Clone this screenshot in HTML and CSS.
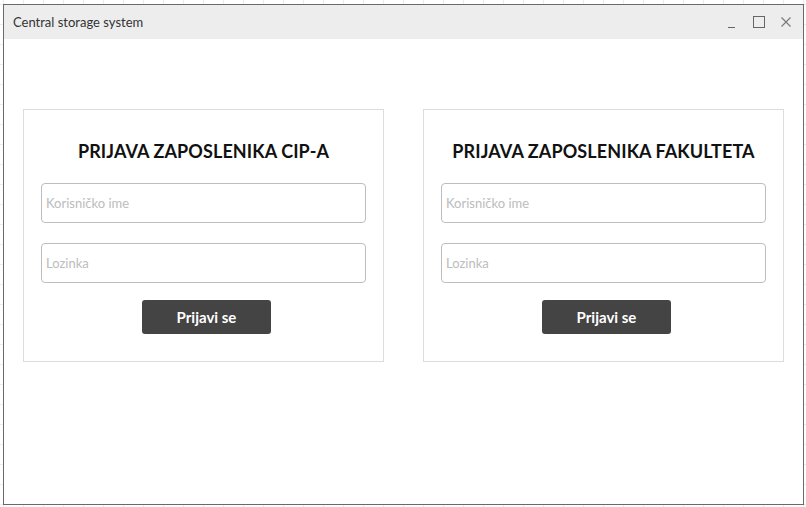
FILE: index.html
```html
<!DOCTYPE html>
<html>
<head>
<meta charset="utf-8">
<link rel="stylesheet" href="styles.css">
</head>
<body>
<div class="window">
  <div class="titlebar">
    <span class="title">Central storage system</span>
    <div class="controls">
      <svg class="ctl" width="14" height="14" viewBox="0 0 14 14"><line x1="3" y1="12.5" x2="10" y2="12.5" stroke="#666" stroke-width="1"/></svg>
      <svg class="ctl" width="14" height="14" viewBox="0 0 14 14"><rect x="1.5" y="1.5" width="11" height="11" fill="none" stroke="#666" stroke-width="1"/></svg>
      <svg class="ctl" width="14" height="14" viewBox="0 0 14 14"><path d="M2.5 2.5 L11.5 11.5 M11.5 2.5 L2.5 11.5" stroke="#777" stroke-width="1.1"/></svg>
    </div>
  </div>
  <div class="content">
    <div class="card">
      <h2 class="card-title">PRIJAVA ZAPOSLENIKA CIP-A</h2>
      <input class="field" type="text" placeholder="Korisničko ime">
      <input class="field" type="password" placeholder="Lozinka">
      <button class="btn">Prijavi se</button>
    </div>
    <div class="card">
      <h2 class="card-title">PRIJAVA ZAPOSLENIKA FAKULTETA</h2>
      <input class="field" type="text" placeholder="Korisničko ime">
      <input class="field" type="password" placeholder="Lozinka">
      <button class="btn">Prijavi se</button>
    </div>
  </div>
</div>
</body>
</html>
```
FILE: styles.css
```css
html, body {
  margin: 0;
  padding: 0;
}
body {
  width: 806px;
  height: 507px;
  overflow: hidden;
  background-color: #fff;
  background-image:
    linear-gradient(to right, #ececec 1px, transparent 1px),
    linear-gradient(to bottom, #ececec 1px, transparent 1px);
  background-size: 20px 20px;
  background-position: 3px 4px;
  font-family: Lato, "Open Sans", sans-serif;
  padding-top: 4px;
  padding-left: 3px;
  box-sizing: border-box;
}
.window {
  width: 801px;
  height: 501px;
  box-sizing: border-box;
  border: 1px solid #6a6a6a;
  background: #fff;
  display: flex;
  flex-direction: column;
}
.titlebar {
  height: 34px;
  background: #ededed;
  display: flex;
  align-items: center;
  justify-content: space-between;
  padding: 0 10px 0 9px;
  flex: none;
}
.title {
  font-size: 13px;
  color: #333;
}
.controls {
  display: flex;
  gap: 13px;
  align-items: center;
}
.ctl {
  display: block;
}
.content {
  display: flex;
  gap: 39px;
  padding: 70px 19px 0 19px;
}
.card {
  width: 361px;
  height: 253px;
  box-sizing: border-box;
  border: 1px solid #dcdcdc;
  padding: 29px 17px 0 17px;
  display: flex;
  flex-direction: column;
  align-items: center;
}
.card-title {
  margin: 0 0 20px 0;
  font-size: 18px;
  font-weight: 700;
  color: #111;
  letter-spacing: 0.1px;
  line-height: 24px;
}
.field {
  width: 100%;
  height: 40px;
  box-sizing: border-box;
  border: 1px solid #bdbdbd;
  border-radius: 4px;
  padding: 0 4px;
  font-family: Lato, "Open Sans", sans-serif;
  font-size: 13px;
  margin: 0 0 20px 0;
  background: #fff;
}
.field::placeholder {
  color: #bcbcbc;
}
.field + .field {
  margin-bottom: 17px;
}
.btn {
  width: 129px;
  height: 34px;
  margin-left: 6px;
  border: none;
  border-radius: 3px;
  background: #444;
  color: #fff;
  font-family: Lato, "Open Sans", sans-serif;
  font-size: 15px;
  font-weight: 700;
  padding: 0;
}
```
